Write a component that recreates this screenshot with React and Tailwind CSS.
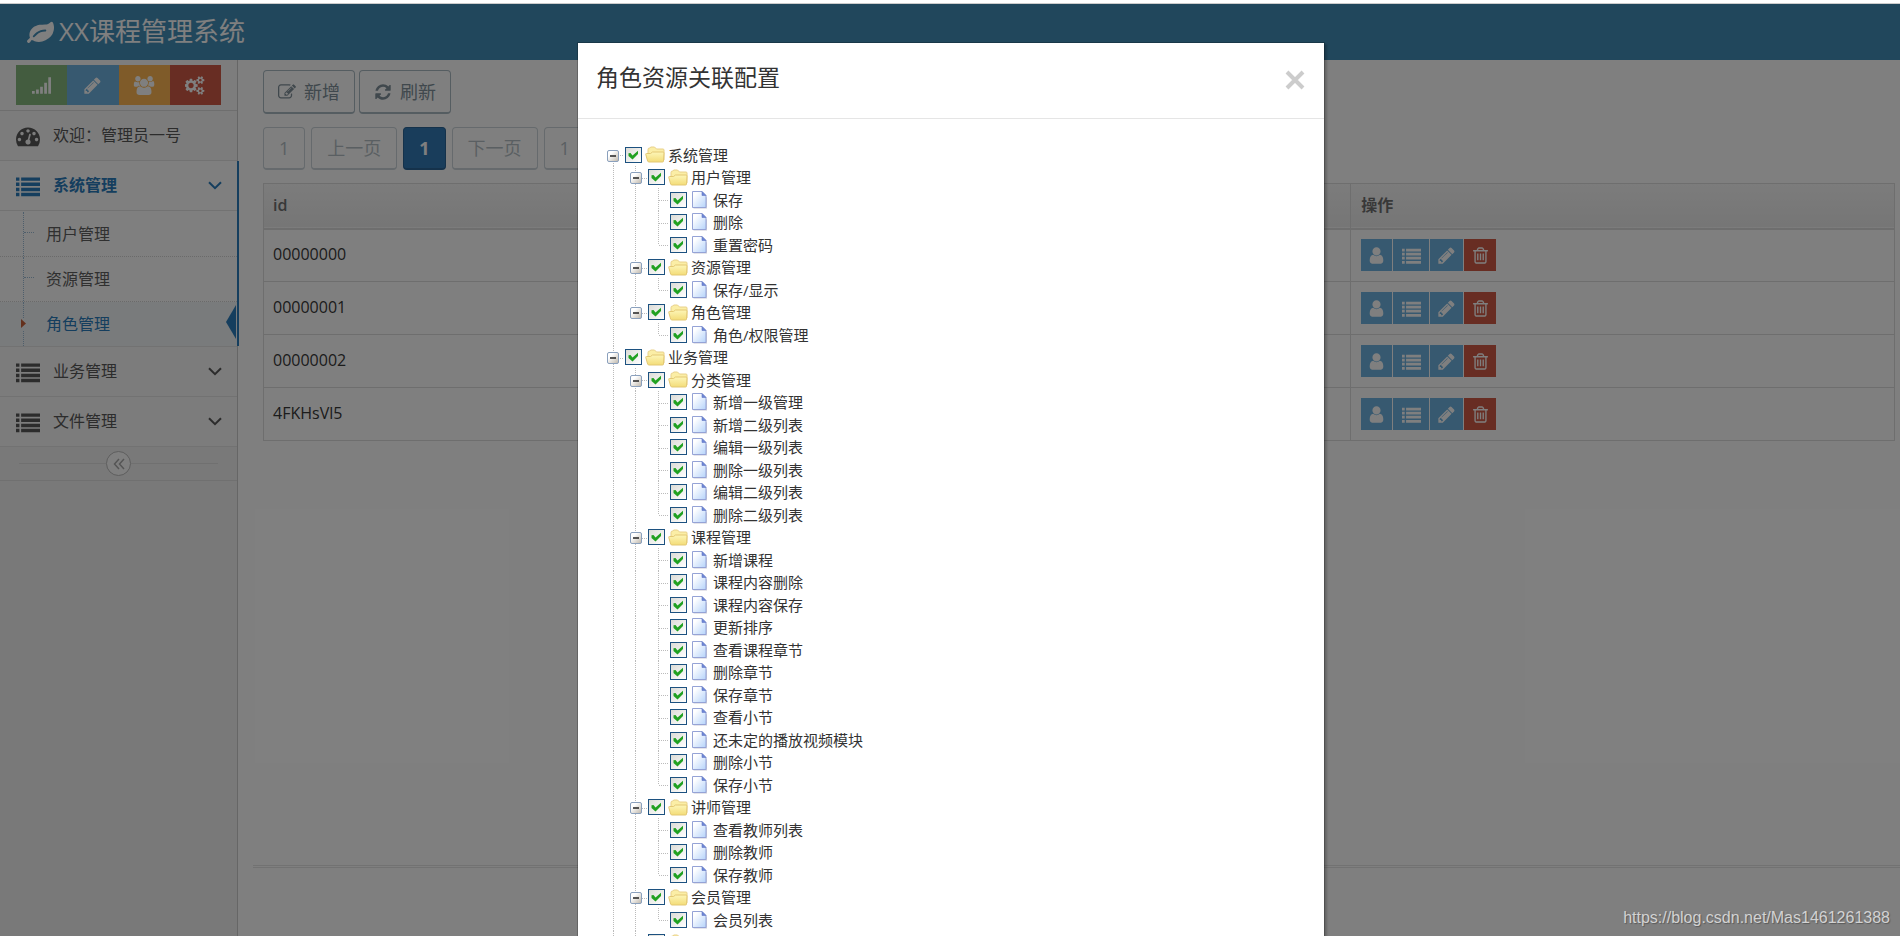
import React from "react";

const PATHS = {
  pencil:
    "M491 1536l91-91-235-235-91 91v107h128v128h107zm523-928q0-22-22-22-10 0-17 7l-542 542q-7 7-7 17 0 22 22 22 10 0 17-7l542-542q7-7 7-17zm-54-192l416 416-832 832h-416v-416zm683 96q0 53-37 90l-166 166-416-416 166-165q36-38 90-38 53 0 91 38l235 234q37 39 37 91z",
  edit:
    "M888 1184l116-116-152-152-116 116v56h96v96h56zm440-720q-16-16-33 1l-350 350q-17 17-1 33t33-1l350-350q17-17 1-33zm80 594v190q0 119-84.5 203.5t-203.5 84.5h-832q-119 0-203.5-84.5t-84.5-203.5v-832q0-119 84.5-203.5t203.5-84.5h832q63 0 117 25 15 7 18 23 3 17-9 29l-49 49q-14 14-32 8-23-6-45-6h-832q-66 0-113 47t-47 113v832q0 66 47 113t113 47h832q66 0 113-47t47-113v-126q0-13 9-22l64-64q15-15 35-7t20 29zm-96-738l288 288-672 672h-288v-288zm444 132l-92 92-288-288 92-92q28-28 68-28t68 28l152 152q28 28 28 68t-28 68z",
  refresh:
    "M1639 1056q0 5-1 7-64 268-268 434.5t-478 166.5q-146 0-282.5-55t-243.5-157l-129 129q-19 19-45 19t-45-19-19-45v-448q0-26 19-45t45-19h448q26 0 45 19t19 45-19 45l-137 137q71 66 161 102t187 36q134 0 250-65t186-179q11-17 53-117 8-23 30-23h192q13 0 22.5 9.5t9.5 22.5zm25-800v448q0 26-19 45t-45 19h-448q-26 0-45-19t-19-45 19-45l138-138q-148-137-349-137-134 0-250 65t-186 179q-11 17-53 117-8 23-30 23h-199q-13 0-22.5-9.5t-9.5-22.5v-7q65-268 270-434.5t480-166.5q146 0 284 55.5t245 156.5l130-129q19-19 45-19t45 19 19 45z",
  gauge:
    "M384 1152q0-53-37.5-90.5t-90.5-37.5-90.5 37.5-37.5 90.5 37.5 90.5 90.5 37.5 90.5-37.5 37.5-90.5zm192-448q0-53-37.5-90.5t-90.5-37.5-90.5 37.5-37.5 90.5 37.5 90.5 90.5 37.5 90.5-37.5 37.5-90.5zm428 481l101-382q6-26-7.5-48.5t-38.5-29.5-48 6.5-30 39.5l-101 382q-60 5-107 43.5t-63 98.5q-20 77 20 146t117 89 146-20 89-117q16-60-6-117t-72-91zm660-33q0-53-37.5-90.5t-90.5-37.5-90.5 37.5-37.5 90.5 37.5 90.5 90.5 37.5 90.5-37.5 37.5-90.5zm-640-640q0-53-37.5-90.5t-90.5-37.5-90.5 37.5-37.5 90.5 37.5 90.5 90.5 37.5 90.5-37.5 37.5-90.5zm448 192q0-53-37.5-90.5t-90.5-37.5-90.5 37.5-37.5 90.5 37.5 90.5 90.5 37.5 90.5-37.5 37.5-90.5zm320 448q0 261-141 483-19 29-54 29h-1402q-35 0-54-29-141-221-141-483 0-182 71-348t191-286 286-191 348-71 348 71 286 191 191 286 71 348z",
  leaf:
    "M1280 832q0-26-19-45t-45-19q-172 0-318 49.5t-259.5 134-235.5 219.5q-19 21-19 45 0 26 19 45t45 19q24 0 45-19 27-24 74-71t67-66q137-124 268.5-176t313.5-52q26 0 45-19t19-45zm512-198q0 95-20 193-46 224-184.5 383t-357.5 268q-214 108-438 108-148 0-286-47-15-5-88-42t-96-37q-16 0-39.5 32t-45 70-52.5 70-60 32q-43 0-63.5-17.5t-45.5-59.5q-2-4-6-11t-5.5-10-3-9.5-1.5-13.5q0-35 31-73.5t68-65.5 68-56 31-48q0-4-14-38t-16-44q-9-51-9-104 0-115 43.5-220t119-184.5 170.5-139 204-95.5q55-18 145-25.5t179.5-9 178.5-6 163.5-24 113.5-56.5l29.5-29.5 29.5-28 27-20 36.5-16 43.5-4.5q39 0 70.5 46t47.5 112 24 124 8 96z",
  user:
    "M1536 1399q0 109-62.5 187t-150.5 78h-854q-88 0-150.5-78t-62.5-187q0-85 8.5-160.5t31.5-152 58.5-131 94-89 134.5-34.5q131 128 313 128t313-128q76 0 134.5 34.5t94 89 58.5 131 31.5 152 8.5 160.5zm-256-887q0 159-112.5 271.5t-271.5 112.5-271.5-112.5-112.5-271.5 112.5-271.5 271.5-112.5 271.5 112.5 112.5 271.5z",
  trash:
    "M704 736v576q0 14-9 23t-23 9h-64q-14 0-23-9t-9-23v-576q0-14 9-23t23-9h64q14 0 23 9t9 23zm256 0v576q0 14-9 23t-23 9h-64q-14 0-23-9t-9-23v-576q0-14 9-23t23-9h64q14 0 23 9t9 23zm256 0v576q0 14-9 23t-23 9h-64q-14 0-23-9t-9-23v-576q0-14 9-23t23-9h64q14 0 23 9t9 23zm128 724v-948h-896v948q0 22 7 40.5t14.5 27 10.5 8.5h832q3 0 10.5-8.5t14.5-27 7-40.5zm-672-1076h448l-48-117q-7-9-17-11h-317q-10 2-17 11zm928 32v64q0 14-9 23t-23 9h-96v948q0 83-47 143.5t-113 60.5h-832q-66 0-113-58.5t-47-141.5v-952h-96q-14 0-23-9t-9-23v-64q0-14 9-23t23-9h309l70-167q15-37 54-63t79-26h320q40 0 79 26t54 63l70 167h309q14 0 23 9t9 23z",
  group:
    "M657 896q-162 5-265 128h-134q-82 0-138-40.5t-56-118.5q0-353 124-353 6 0 43.5 21t97.5 42.5 119 21.5q67 0 133-23-5 37-5 66 0 159 93 293zm1071 637q0 120-73 189.5t-194 69.5h-874q-121 0-194-69.5t-73-189.5q0-53 3.5-103.5t14-109 26.5-108.5 43-97.5 62-81 85.5-53.5 111.5-20q10 0 43 21.5t73 48 107 48 135 21.5 135-21.5 107-48 73-48 43-21.5q61 0 111.5 20t85.5 53.5 62 81 43 97.5 26.5 108.5 14 109 3.5 103.5zm-1024-1277q0 106-75 181t-181 75-181-75-75-181 75-181 181-75 181 75 75 181zm704 384q0 159-112.5 271.5t-271.5 112.5-271.5-112.5-112.5-271.5 112.5-271.5 271.5-112.5 271.5 112.5 112.5 271.5zm576 225q0 78-56 118.5t-138 40.5h-134q-103-123-265-128 93-134 93-293 0-29-5-66 66 23 133 23 59 0 119-21.5t97.5-42.5 43.5-21q124 0 124 353zm-128-609q0 106-75 181t-181 75-181-75-75-181 75-181 181-75 181 75 75 181z",
  cogs:
    "M832 896q0-106-75-181t-181-75-181 75-75 181 75 181 181 75 181-75 75-181zm768 512q0-52-38-90t-90-38-90 38-38 90q0 53 37.5 90.5t90.5 37.5 90.5-37.5 37.5-90.5zm0-1024q0-52-38-90t-90-38-90 38-38 90q0 53 37.5 90.5t90.5 37.5 90.5-37.5 37.5-90.5zm-384 421v185q0 10-7 19.5t-16 10.5l-155 24q-11 35-32 76 34 48 90 115 7 11 7 20 0 12-7 19-23 30-82.5 89.5t-78.5 59.5q-11 0-21-7l-115-90q-37 19-77 31-11 108-23 155-7 24-30 24h-186q-11 0-20-7.5t-10-17.5l-23-153q-34-10-75-31l-118 89q-7 7-20 7-11 0-21-8-144-133-144-160 0-9 7-19 10-14 41-53t47-61q-23-44-35-82l-152-24q-10-1-17-9.5t-7-19.5v-185q0-10 7-19.5t16-10.5l155-24q11-35 32-76-34-48-90-115-7-11-7-20 0-12 7-20 22-30 82-89t79-59q11 0 21 7l115 90q34-18 77-32 11-108 23-154 7-24 30-24h186q11 0 20 7.5t10 17.5l23 153q34 10 75 31l118-89q8-7 20-7 11 0 21 8 144 133 144 160 0 8-7 19-12 16-42 54t-45 60q23 48 34 82l152 23q10 2 17 10.5t7 19.5zm640 533v140q0 16-149 31-12 27-30 52 51 113 51 138 0 4-4 7-122 71-124 71-8 0-46-47t-52-68q-20 2-30 2t-30-2q-14 21-52 68t-46 47q-2 0-124-71-4-3-4-7 0-25 51-138-18-25-30-52-149-15-149-31v-140q0-16 149-31 13-29 30-52-51-113-51-138 0-4 4-7 4-2 35-20t59-34 30-16q8 0 46 46.5t52 67.5q20-2 30-2t30 2q51-71 92-112l6-2q4 0 124 70 4 3 4 7 0 25-51 138 17 23 30 52 149 15 149 31zm0-1024v140q0 16-149 31-12 27-30 52 51 113 51 138 0 4-4 7-122 71-124 71-8 0-46-47t-52-68q-20 2-30 2t-30-2q-14 21-52 68t-46 47q-2 0-124-71-4-3-4-7 0-25 51-138-18-25-30-52-149-15-149-31v-140q0-16 149-31 13-29 30-52-51-113-51-138 0-4 4-7 4-2 35-20t59-34 30-16q8 0 46 46.5t52 67.5q20-2 30-2t30 2q51-71 92-112l6-2q4 0 124 70 4 3 4 7 0 25-51 138 17 23 30 52 149 15 149 31z",
  list:
    "M0 256h256v256H0zM384 256h1408v256H384zM0 640h256v256H0zM384 640h1408v256H384zM0 1024h256v256H0zM384 1024h1408v256H384zM0 1408h256v256H0zM384 1408h1408v256H384z",
  signal:
    "M0 1408h256v256H0zM384 1280h256v384H384zM768 1024h256v640H768zM1152 640h256v1024h-256zM1536 128h256v1536h-256z",
};

function Icon({ name, className, box = "0 0 1792 1792" }) {
  return (
    <svg viewBox={box} className={className} fill="currentColor" aria-hidden="true">
      <path d={PATHS[name]} />
    </svg>
  );
}

const Chevron = () => (
  <svg viewBox="0 0 14 9" className="h-[9px] w-[14px]" fill="none" stroke="currentColor" strokeWidth="2" aria-hidden="true">
    <path d="M1 1.2l6 6 6-6" />
  </svg>
);

const shortcuts = [
  { name: "signal", label: "统计", color: "bg-[#87b87f]", size: "size-[19px]" },
  { name: "pencil", label: "编辑", color: "bg-[#6fb3e0]", size: "size-[19px]" },
  { name: "group", label: "用户", color: "bg-[#ffb752]", size: "h-[19px] w-[22px]", box: "0 0 2048 1792" },
  { name: "cogs", label: "设置", color: "bg-[#d15b47]", size: "h-[19px] w-[20px]", box: "0 0 1920 1792" },
];

function MenuItem({ icon, label, arrow, active }) {
  return (
    <a
      href="#menu"
      className={
        "flex h-[50px] items-center border-b border-[#e5e5e5] pl-4 pr-[15px] " +
        (active ? "bg-white font-bold text-[#2b7dbc]" : "bg-[#f8f8f8] text-[#585858]")
      }
    >
      <Icon name={icon} className="size-6" />
      <span className="ml-[13px] flex-1 pb-0.5">{label}</span>
      {arrow && <Chevron />}
    </a>
  );
}

function SubItem({ label, selected }) {
  return (
    <li className="relative border-t border-dotted border-[#d4d4d4] bg-white first:border-transparent">
      <a
        href="#submenu"
        className={
          "flex h-11 items-center pl-[46px] " +
          (selected ? "bg-[#f2f6f9] text-[#2b7dbc]" : "bg-white text-[#616161]")
        }
      >
        {label}
      </a>
      <span className="absolute inset-y-0 left-[23px] border-l border-dotted border-[#9dbdd6]" />
      {selected ? (
        <>
          <span className="absolute left-[21px] top-4 h-3 w-1.5 bg-[#f2f6f9]" />
          <svg viewBox="0 0 5 9" className="absolute left-[21px] top-[17px] h-[9px] w-[5px] text-[#c86139]" aria-hidden="true">
            <path d="M0 0l5 4.5L0 9z" fill="currentColor" />
          </svg>
          <svg viewBox="0 0 10 34" className="absolute right-px top-[3px] h-[34px] w-[10px] text-[#2b7dbc]" aria-hidden="true">
            <path d="M10 0v34L0 17z" fill="currentColor" />
          </svg>
        </>
      ) : (
        <span className="absolute left-6 top-5 w-2.5 border-t border-dotted border-[#9dbdd6]" />
      )}
    </li>
  );
}

function Sidebar() {
  return (
    <aside className="w-[238px] shrink-0 border-r border-[#ccc] bg-[#f2f2f2] text-base">
      <div className="flex border-b border-[#ddd] bg-[#fafafa] px-4 py-[5px]">
        {shortcuts.map((s) => (
          <button
            key={s.name}
            aria-label={s.label}
            className={"flex h-10 flex-1 items-center justify-center text-white " + s.color}
          >
            <Icon name={s.name} className={s.size} box={s.box} />
          </button>
        ))}
      </div>
      <nav>
        <MenuItem icon="gauge" label="欢迎：管理员一号" />
        <div className="relative border-b border-[#e5e5e5]">
          <MenuItem icon="list" label="系统管理" arrow active />
          <ul>
            <SubItem label="用户管理" />
            <SubItem label="资源管理" />
            <SubItem label="角色管理" selected />
          </ul>
          <span className="absolute -right-0.5 inset-y-0 w-0.5 bg-[#2b7dbc]" />
        </div>
        <MenuItem icon="list" label="业务管理" arrow />
        <MenuItem icon="list" label="文件管理" arrow />
      </nav>
      <div className="flex h-[34px] items-center border-b border-[#e0e0e0] bg-[#f3f3f3] px-[19px]">
        <span className="flex-1 border-t border-[#e0e0e0]" />
        <button
          aria-label="收起菜单"
          className="flex size-[25px] items-center justify-center rounded-full border border-[#bbb] bg-white text-[#aaa]"
        >
          <svg viewBox="0 0 12 12" className="size-3" fill="none" stroke="currentColor" strokeWidth="1.5" aria-hidden="true">
            <path d="M6 1L1.500 6 6 11M11 1L6.500 6l4.500 5" />
          </svg>
        </button>
        <span className="flex-1 border-t border-[#e0e0e0]" />
      </div>
    </aside>
  );
}

function ToolButton({ icon, label }) {
  return (
    <button className="flex h-11 items-center gap-2 rounded border border-b-2 border-[#abbac3] bg-white px-[14px] text-lg text-[#80909a]">
      <Icon name={icon} className="size-[18px]" />
      {label}
    </button>
  );
}

function PageButton({ label, active }) {
  return (
    <button
      disabled={!active}
      className={
        "h-[43px] rounded border border-b-2 px-[15px] text-lg " +
        (active
          ? "border-[#2a6496] bg-[#337ab7] font-bold text-white"
          : "border-[#ccd5da] bg-white text-[#b5bfc5]")
      }
    >
      {label}
    </button>
  );
}

const rowActions = [
  { name: "user", label: "用户", cls: "w-[31px] bg-[#6fb3e0]" },
  { name: "list", label: "资源", cls: "w-[36px] bg-[#6fb3e0]" },
  { name: "pencil", label: "编辑", cls: "w-[33px] bg-[#6fb3e0]" },
  { name: "trash", label: "删除", cls: "w-[32px] bg-[#d15b47]" },
];

function RoleTable() {
  return (
    <table className="w-full border-collapse border border-[#ddd] text-base text-[#393939]">
      <thead>
        <tr className="h-[45px] border-b-2 border-[#ddd] bg-linear-to-b from-[#f8f8f8] to-[#ececec] text-left text-[#707070]">
          <th className="w-2/3 border-r border-[#ddd] px-[9px] pb-0.5 font-semibold">id</th>
          <th className="px-2.5 pb-0.5 font-semibold">操作</th>
        </tr>
      </thead>
      <tbody>
        {["00000000", "00000001", "00000002", "4FKHsVl5"].map((id) => (
          <tr key={id} className="h-[53px] border-b border-[#ddd]">
            <td className="border-r border-[#ddd] px-[9px] pb-0.5">{id}</td>
            <td className="px-2.5">
              <div className="flex gap-px">
                {rowActions.map((a) => (
                  <button
                    key={a.name}
                    aria-label={a.label}
                    className={"flex h-8 items-center justify-center text-white " + a.cls}
                  >
                    <Icon name={a.name} className="size-[19px]" />
                  </button>
                ))}
              </div>
            </td>
          </tr>
        ))}
      </tbody>
    </table>
  );
}

const resources = [
  ["系统管理", [
    ["用户管理", ["保存", "删除", "重置密码"]],
    ["资源管理", ["保存/显示"]],
    ["角色管理", ["角色/权限管理"]],
  ]],
  ["业务管理", [
    ["分类管理", ["新增一级管理", "新增二级列表", "编辑一级列表", "删除一级列表", "编辑二级列表", "删除二级列表"]],
    ["课程管理", ["新增课程", "课程内容删除", "课程内容保存", "更新排序", "查看课程章节", "删除章节", "保存章节", "查看小节", "还未定的播放视频模块", "删除小节", "保存小节"]],
    ["讲师管理", ["查看教师列表", "删除教师", "保存教师"]],
    ["会员管理", ["会员列表"]],
    ["", []],
  ]],
];

// Flatten the tree into rows; each cell describes one column of connector lines.
const rows = [];
resources.forEach(([root, groups], r) => {
  rows.push({ label: root, folder: true, cells: [{ sw: true, up: r > 0, down: true }] });
  groups.forEach(([group, leaves], g) => {
    const more = g < groups.length - 1 || r === resources.length - 1;
    rows.push({ label: group, folder: true, cells: [{ up: true, down: true }, { sw: true, up: true, down: more }] });
    leaves.forEach((leaf, l) => {
      rows.push({
        label: leaf,
        cells: [
          { up: true, down: true },
          { up: more, down: more },
          { up: true, down: l < leaves.length - 1, right: true },
        ],
      });
    });
  });
});

function Connector({ cell, wide }) {
  return (
    <span className={"relative flex h-full shrink-0 items-center justify-center " + (wide ? "w-[23px]" : "w-[22px]")}>
      <svg className="absolute inset-0 size-full" stroke="#bbb" strokeDasharray="1 1" aria-hidden="true">
        {cell.up && <line x1="11.5" x2="11.5" y1="0" y2="12" />}
        {cell.down && <line x1="11.5" x2="11.5" y1="12" y2="100%" />}
        {(cell.right || cell.sw) && <line x1="12" x2="100%" y1="12.5" y2="12.5" />}
      </svg>
      {cell.sw && (
        <button aria-label="折叠" className="relative mt-0.5 block size-3">
          <svg viewBox="0 0 12 12" className="size-3" aria-hidden="true">
            <defs>
              <linearGradient id="switchFill" x1="0" y1="0" x2="1" y2="1">
                <stop offset="0.3" stopColor="#fff" />
                <stop offset="1" stopColor="#bdb5a8" />
              </linearGradient>
            </defs>
            <rect x="0.5" y="0.5" width="11" height="11" rx="1.500" fill="url(#switchFill)" stroke="#8aa0bd" />
            <path d="M3 6h6" stroke="#222" strokeWidth="1.500" />
          </svg>
        </button>
      )}
    </span>
  );
}

const Folder = () => (
  <svg viewBox="0 0 20 17" className="h-[17px] w-5" aria-hidden="true">
    <defs>
      <linearGradient id="folderFill" x1="0" y1="0" x2="0" y2="1">
        <stop offset="0" stopColor="#fdf6b8" />
        <stop offset="1" stopColor="#f3dc78" />
      </linearGradient>
    </defs>
    <path d="M3 13V3.500Q3 2 4.500 2L6 1h3.500l2 2H18q1 0 1 1v10z" fill="#fbeea6" stroke="#e8d08a" />
    <path d="M.8 8.500Q.5 7.500 1.500 7.500h4L7.500 6H18q1 0 1 1l-.5 8q0 1-1 1H4q-1 0-1.400-1z" fill="url(#folderFill)" stroke="#e3c874" />
  </svg>
);

const Page = () => (
  <svg viewBox="0 0 20 18" className="h-[18px] w-5" aria-hidden="true">
    <defs>
      <linearGradient id="pageFill" x1="0" y1="0" x2="1" y2="1">
        <stop offset="0.2" stopColor="#fff" />
        <stop offset="1" stopColor="#b5d3fa" />
      </linearGradient>
    </defs>
    <path d="M3.500 2.500h9.500l4 4V17.500H3.500z" fill="#a8a8bd" opacity=".6" />
    <path d="M2.500 .5h9.500l4 4v12H2.500z" fill="url(#pageFill)" stroke="#95a3d6" />
    <path d="M12 .5v4h4z" fill="#6b85d6" stroke="#6478c4" strokeWidth=".6" />
  </svg>
);

function ResourceTree() {
  return (
    <ul className="pl-6 pt-6 text-[15px] leading-[22px] text-[#333]">
      {rows.map((row, i) => (
        <li key={i} className="flex h-[23px] even:h-[22px]">
          {row.cells.map((c, k) => (
            <Connector key={k} cell={c} wide={k === 1} />
          ))}
          <label className="ml-px flex items-center gap-[3px] whitespace-nowrap">
            <span className="relative block h-4 w-[17px]">
              <input
                type="checkbox"
                defaultChecked
                className="peer block h-4 w-[17px] appearance-none border border-[#1c5180] bg-linear-to-br from-[#dcdcd7] to-white"
              />
              <svg
                viewBox="0 0 17 16"
                className="pointer-events-none absolute inset-0 hidden size-full peer-checked:block"
                aria-hidden="true"
              >
                <path d="M3.500 6.200L5.500 6l2 2.400L13 3.800v3.200L7.500 12.400 3.500 9z" fill="#21a121" />
              </svg>
            </span>
            {row.folder ? <Folder /> : <Page />}
            <span>{row.label}</span>
          </label>
        </li>
      ))}
    </ul>
  );
}

function Modal() {
  return (
    <div className="absolute inset-0 overflow-hidden bg-black/50 pl-0.5">
      <div
        role="dialog"
        aria-labelledby="dialog-title"
        className="mx-auto mt-[38px] w-[748px] max-w-full border border-black/20 bg-white bg-clip-padding shadow-[2px_2px_2px_rgba(0,0,0,0.2)]"
      >
        <div className="flex h-[76px] items-center justify-between border-b border-[#e5e5e5] pb-1.5 pl-[18px] pr-[19px]">
          <h4 id="dialog-title" className="text-[23px] text-[#333]">角色资源关联配置</h4>
          <button aria-label="关闭" className="text-[#ccc]">
            <svg viewBox="0 0 20 20" className="mt-1 size-5" stroke="currentColor" strokeWidth="4" aria-hidden="true">
              <path d="M2 2l16 16M18 2L2 18" />
            </svg>
          </button>
        </div>
        <ResourceTree />
      </div>
    </div>
  );
}

export default function App() {
  return (
    <div className="flex h-screen flex-col overflow-hidden bg-white font-['Open_Sans','Noto_Sans_CJK_SC',sans-serif]">
      <div className="h-1 shrink-0 border-b border-[#ccc]" />
      <div className="relative flex min-h-0 flex-1 flex-col">
        <header className="flex h-14 shrink-0 items-center gap-[5px] bg-[#438eb9] pb-0.5 pl-[27px] text-white">
          <Icon name="leaf" className="size-[27px]" />
          <h1 className="text-[26px] leading-8">XX课程管理系统</h1>
        </header>
        <div className="flex min-h-0 flex-1">
          <Sidebar />
          <div className="flex min-w-0 flex-1 flex-col">
            <main className="flex-1 pl-[25px] pr-[5px] pt-2.5">
              <div className="flex gap-1">
                <ToolButton icon="edit" label="新增" />
                <ToolButton icon="refresh" label="刷新" />
              </div>
              <div className="my-[13px] flex gap-1.5">
                <PageButton label="1" />
                <PageButton label="上一页" />
                <PageButton label="1" active />
                <PageButton label="下一页" />
                <PageButton label="1" />
              </div>
              <RoleTable />
            </main>
            <footer className="ml-[15px] h-[71px] border-t-[3px] border-double border-[#e5e5e5]" />
          </div>
        </div>
        <Modal />
        <p className="absolute bottom-1.5 right-2.5 font-['Liberation_Sans',sans-serif] text-base text-[#d2d2d2] [text-shadow:1px_1px_1px_rgba(0,0,0,0.3)]">
          https://blog.csdn.net/Mas1461261388
        </p>
      </div>
    </div>
  );
}
